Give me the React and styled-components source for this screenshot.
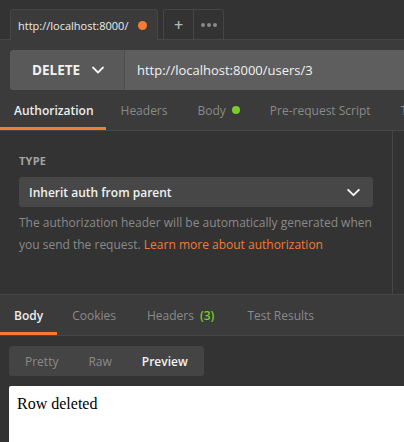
import React from 'react';
import styled, { createGlobalStyle } from 'styled-components';

const GlobalStyle = createGlobalStyle`
  html, body {
    margin: 0;
    padding: 0;
    background: #333333;
    font-family: "Open Sans", "DejaVu Sans", sans-serif;
    overflow: hidden;
  }
`;

const colors = {
  dark: '#333333',
  mid: '#3b3b3b',
  border: '#464646',
  orange: '#f47b32',
  green: '#78cc2c',
  text: '#ececec',
  muted: '#8c8c8c',
};

const Page = styled.div`
  width: 404px;
  height: 442px;
  overflow: hidden;
  background: ${colors.dark};
`;

const TabBar = styled.div`
  height: 39px;
  display: flex;
  align-items: flex-end;
  padding-left: 10px;
  border-bottom: 1px solid ${colors.border};
  background: ${colors.dark};
`;

const FileTab = styled.div`
  width: 148px;
  height: 31px;
  box-sizing: border-box;
  border: 1px solid ${colors.border};
  border-bottom: none;
  border-radius: 3px 3px 0 0;
  background: ${colors.mid};
  margin-bottom: -1px;
  display: flex;
  align-items: center;
  justify-content: space-between;
  padding: 0 10px 0 7px;
  color: ${colors.text};
  font-size: 11px;
`;

const Dot = styled.span`
  width: ${(p) => p.size}px;
  height: ${(p) => p.size}px;
  border-radius: 50%;
  background: ${(p) => p.color};
  display: inline-block;
  flex-shrink: 0;
`;

const TabActions = styled.div`
  display: flex;
  margin-left: 5px;
  height: 30px;
  box-sizing: border-box;
  border: 1px solid ${colors.border};
  border-bottom: none;
  border-radius: 3px 3px 0 0;
`;

const ActionCell = styled.div`
  width: 29px;
  display: flex;
  align-items: center;
  justify-content: center;
  color: #b5b5b5;
  font-size: 16px;
  font-weight: 600;
  & + & {
    border-left: 1px solid ${colors.border};
  }
`;

const Request = styled.div`
  background: ${colors.mid};
`;

const UrlRow = styled.div`
  display: flex;
  height: 40px;
  padding: 10px 0 0 10px;
`;

const MethodButton = styled.div`
  width: 115px;
  box-sizing: border-box;
  background: #595959;
  border-radius: 3px 0 0 3px;
  border-right: 1px solid #4c4c4c;
  display: flex;
  align-items: center;
  padding-left: 22px;
  gap: 11px;
  color: #f2f2f2;
  font-size: 13.5px;
  font-weight: 700;
`;

const UrlField = styled.div`
  flex: 1;
  background: #5e5e5e;
  display: flex;
  align-items: center;
  padding-left: 12px;
  color: #f2f2f2;
  font-size: 13px;
`;

const TabsRow = styled.div`
  display: flex;
  height: 41px;
  box-sizing: border-box;
  border-bottom: 1px solid ${colors.border};
  white-space: nowrap;
  overflow: hidden;
`;

const TabItem = styled.div`
  display: flex;
  align-items: center;
  gap: 6px;
  padding: 0 ${(p) => p.pad || 15}px 0 ${(p) => p.padLeft || p.pad || 15}px;
  font-size: 12px;
  font-weight: ${(p) => (p.active ? 600 : 400)};
  color: ${(p) => (p.active ? colors.text : '#8a8a8a')};
  box-shadow: ${(p) => (p.active ? `inset 0 -3px 0 ${colors.orange}` : 'none')};
  flex-shrink: 0;
`;

const Count = styled.span`
  color: ${colors.green};
  font-weight: 600;
`;

const AuthSection = styled.div`
  display: flex;
  height: 163px;
  border-bottom: 1px solid ${colors.border};
  background: ${colors.dark};
`;

const AuthPanel = styled.div`
  width: 393px;
  box-sizing: border-box;
  border-right: 1px solid ${colors.border};
  padding: 22px 20px 0 19px;
  flex-shrink: 0;
`;

const Label = styled.div`
  font-size: 11px;
  font-weight: 700;
  color: #a4a4a4;
  letter-spacing: 0.2px;
  margin-bottom: 9px;
`;

const Select = styled.div`
  width: 354px;
  height: 30px;
  box-sizing: border-box;
  background: #474747;
  border-radius: 3px;
  display: flex;
  align-items: center;
  justify-content: space-between;
  padding: 0 12px 0 10px;
  color: #f2f2f2;
  font-size: 12px;
  font-weight: 600;
`;

const Hint = styled.p`
  margin: 5px 0 0;
  font-size: 12px;
  line-height: 22px;
  color: #8a8a8a;
  width: 360px;
`;

const Link = styled.span`
  color: ${colors.orange};
`;

const ResponseTabs = styled(TabsRow)`
  height: 41px;
  background: ${colors.mid};
`;

const Response = styled.div`
  padding: 10px 0 0 9px;
`;

const Segmented = styled.div`
  display: inline-flex;
  height: 30px;
  background: #444444;
  border-radius: 3px;
  padding: 0 16px;
  gap: 30px;
  align-items: center;
`;

const Segment = styled.span`
  font-size: 12px;
  font-weight: ${(p) => (p.active ? 600 : 400)};
  color: ${(p) => (p.active ? '#f2f2f2' : '#8a8a8a')};
`;

const Preview = styled.div`
  margin-top: 10px;
  height: 80px;
  background: #ffffff;
  border-radius: 2px 0 0 0;
  padding: 9px 8px;
  font-family: "Liberation Serif", "Times New Roman", serif;
  font-size: 16px;
  color: #000;
`;

const Chevron = ({ size = 14, color = '#f2f2f2' }) => (
  <svg width={size} height={size} viewBox="0 0 14 14" fill="none">
    <path d="M2 4.5 L7 9.5 L12 4.5" stroke={color} strokeWidth="1.8" strokeLinecap="round" strokeLinejoin="round" />
  </svg>
);

const Dots = () => (
  <svg width="16" height="4" viewBox="0 0 16 4">
    <circle cx="2" cy="2" r="2" fill="#8a8a8a" />
    <circle cx="8" cy="2" r="2" fill="#8a8a8a" />
    <circle cx="14" cy="2" r="2" fill="#8a8a8a" />
  </svg>
);

const requestTabs = ['Authorization', 'Headers', 'Body', 'Pre-request Script', 'Tests'];

const App = () => (
  <Page>
    <GlobalStyle />
    <TabBar>
      <FileTab>
        <span>http://localhost:8000/</span>
        <Dot size={9} color={colors.orange} />
      </FileTab>
      <TabActions>
        <ActionCell>+</ActionCell>
        <ActionCell><Dots /></ActionCell>
      </TabActions>
    </TabBar>

    <Request>
      <UrlRow>
        <MethodButton>
          DELETE <Chevron />
        </MethodButton>
        <UrlField>http://localhost:8000/users/3</UrlField>
      </UrlRow>
      <TabsRow>
        {requestTabs.map((t, i) => (
          <TabItem key={t} active={i === 0} padLeft={i === 0 ? 14 : 15} pad={i === 0 ? 12 : 15}>
            {t}
            {t === 'Body' && <Dot size={8} color={colors.green} />}
          </TabItem>
        ))}
      </TabsRow>
    </Request>

    <AuthSection>
      <AuthPanel>
        <Label>TYPE</Label>
        <Select>
          Inherit auth from parent
          <Chevron size={15} />
        </Select>
        <Hint>
          The authorization header will be automatically generated when you send the request.{' '}
          <Link>Learn more about authorization</Link>
        </Hint>
      </AuthPanel>
    </AuthSection>

    <ResponseTabs>
      <TabItem active pad={14}>Body</TabItem>
      <TabItem pad={15}>Cookies</TabItem>
      <TabItem pad={16}>Headers <Count>(3)</Count></TabItem>
      <TabItem pad={17}>Test Results</TabItem>
    </ResponseTabs>

    <Response>
      <Segmented>
        <Segment>Pretty</Segment>
        <Segment>Raw</Segment>
        <Segment active>Preview</Segment>
      </Segmented>
      <Preview>Row deleted</Preview>
    </Response>
  </Page>
);

export default App;
